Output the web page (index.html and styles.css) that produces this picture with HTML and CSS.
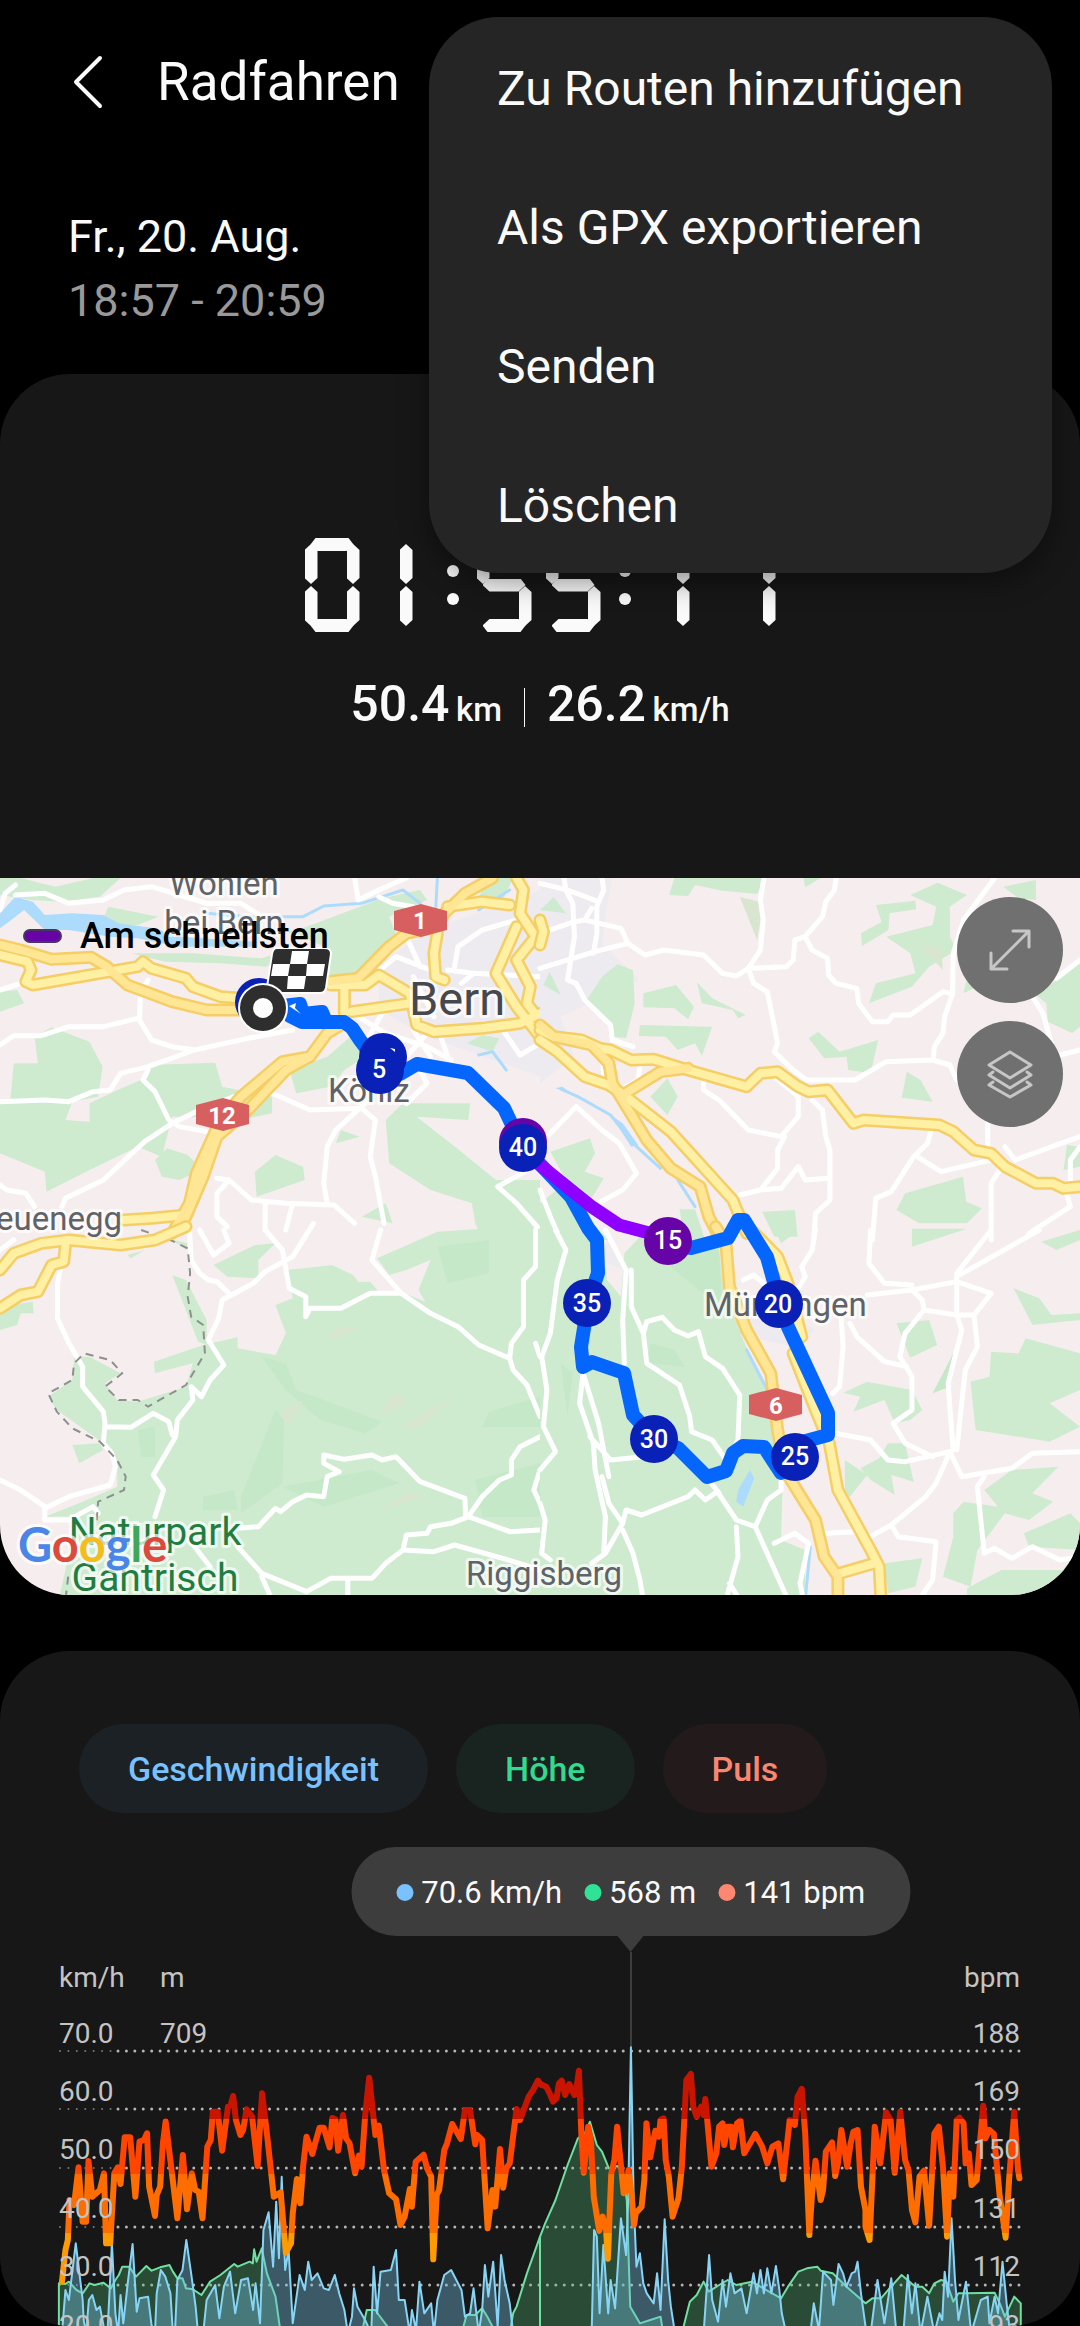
FILE: index.html
```html
<!DOCTYPE html>
<html lang="de">
<head>
    <meta charset="UTF-8">
    <meta name="viewport" content="width=device-width, initial-scale=1.0">
    <title>Radfahren</title>
    <link rel="stylesheet" href="styles.css">
</head>
<body>
    <header class="app-bar">
        <button class="back-button" type="button" aria-label="Zurück">
            <svg width="30" height="54" viewBox="0 0 30 54"><path d="M27 3 3 27l24 24"/></svg>
        </button>
        <h1>Radfahren</h1>
    </header>

    <nav class="menu" aria-label="Weitere Optionen">
        <button type="button">Zu Routen hinzufügen</button>
        <button type="button">Als GPX exportieren</button>
        <button type="button">Senden</button>
        <button type="button">Löschen</button>
    </nav>

    <div class="workout-date">
        <div>Fr., 20. Aug.</div>
        <div class="workout-time">18:57 - 20:59</div>
    </div>

    <main>
        <section class="card">
            <div class="summary">
                <div class="timer" role="img" aria-label="01:55:11">
                    <div class="hours">
                        <span class="digit"><i class="seg top"></i><i class="seg up left"></i><i class="seg up right"></i><i class="seg down left"></i><i class="seg down right"></i><i class="seg bottom"></i></span>
                        <span class="digit one"><i class="seg up right"></i><i class="seg down right"></i></span>
                    </div>
                    <span class="colon"><i></i><i></i></span>
                    <div class="minutes">
                        <span class="digit"><i class="seg top"></i><i class="seg up left"></i><i class="seg middle"></i><i class="seg down right"></i><i class="seg bottom"></i></span>
                        <span class="digit"><i class="seg top"></i><i class="seg up left"></i><i class="seg middle"></i><i class="seg down right"></i><i class="seg bottom"></i></span>
                    </div>
                    <span class="colon"><i></i><i></i></span>
                    <div class="seconds">
                        <span class="digit one"><i class="seg up right"></i><i class="seg down right"></i></span>
                        <span class="digit one"><i class="seg up right"></i><i class="seg down right"></i></span>
                    </div>
                </div>
                <div class="totals">
                    <div>50.4 <small>km</small></div>
                    <div class="divider"></div>
                    <div>26.2 <small>km/h</small></div>
                </div>
            </div>

            <div class="map">
                <svg class="map-canvas" viewBox="0 0 1080 717" role="img" aria-label="Karte der Route">
                    <defs>
                        <g id="roads-nw">
                            <path d="M0 255L80 275 90 300 75 335 95 345 400 290 415 275 440 295 540 325 560 350 640 380 700 385"/>
                            <path d="M960 345L1060 345 1100 315 1190 370 1210 465 1260 485 1400 475 1510 460 1568 430M1000 350V430M1020 425L1190 400"/>
                            <path d="M1270 190L1260 250 1265 320 1290 330M1300 110L1400 95 1480 105M1500 170L1440 310 1500 410 1568 500"/>
                            <path d="M1500 24L1520 60 1510 130 1555 200 1500 270 1540 350 1530 400 1568 450M360 1050L440 1045 540 1035"/>
                        </g>
                        <g id="motorways-nw">
                            <path d="M0 225L60 240 150 268 265 262 310 290 370 345 500 395 600 420 700 420"/>
                            <path d="M950 335L1040 325 1130 230 1180 190 1270 170 1290 130 1350 70 1430 24"/>
                            <path d="M990 465L950 490 900 560 820 575 700 680 640 750 570 910 550 1000 500 1090"/>
                            <path d="M900 560L830 600 720 720 630 800 590 920 540 1040"/>
                        </g>
                        <g id="roads-ne">
                            <path d="M0 480L40 500 120 510 175 535 205 540 265 570 330 568 430 600 600 650 640 610 690 605 750 650 780 665 835 660 910 760 940 750 1160 765 1200 785 1260 840 1310 850 1350 890 1440 940 1490 940 1520 955 1568 950"/>
                            <path d="M0 510L50 545 130 620 200 645 250 680 380 785 560 990 600 1090"/>
                            <path d="M0 150L10 185 0 225"/>
                        </g>
                        <g id="motorways-ne">
                            <path d="M0 465L40 500 150 525 200 580 210 640 310 810 380 895 465 950 490 1040 515 1090M240 675L350 605 430 595"/>
                        </g>
                        <g id="roads-sw">
                            <path d="M190 45L185 95 150 105 110 185 60 195 0 235"/>
                            <path d="M0 120L40 70 120 40 200 30 350 45 450 30 540 -10"/>
                        </g>
                        <g id="roads-se">
                            <path d="M605 -10L690 80 720 160 760 320M735 370L800 540 840 640 865 780 960 960 985 1010 990 1110M870 1030L970 1000"/>
                        </g>
                        <g id="motorways-se">
                            <path d="M510 -10L540 40 550 170 600 300 670 430 690 600 710 720 800 870 825 980 865 1040V1110"/>
                        </g>
                    </defs>

                    <rect class="ground" width="1080" height="717"/>

                    <!-- north west -->
                    <g transform="translate(0 -8) scale(.34439 .33333)">
                        <path class="town" d="M1100 280L1250 180 1568 60V620L1240 500 1100 420z"/>
                        <path class="wood" d="M0 24H60L160 50 270 24H350L290 80 180 95 90 90 0 75zM290 165L315 110 460 140 400 165zM840 190L1110 85 1220 60 1240 90 1130 140 1160 220 1060 300 960 330 950 235 830 175zM380 250L560 250 760 265 830 240 960 230 770 290 640 280 480 275zM0 365L50 360 70 400 0 425zM1390 80L1420 24H1490L1460 90z"/>
                        <path class="wood" d="M40 580H110L100 500 150 472 260 515 298 590 285 680 210 695 190 750 260 755V700L330 665 420 625 430 585 625 578 645 650 790 680V730L720 745 500 740 470 860 400 830 260 900 135 965 130 905 0 850V700L30 690zM450 870L485 835 545 855 590 900 520 930 470 920zM740 905L800 855 880 890 885 930 745 980zM975 820L990 780 1045 800z"/>
                        <path class="wood" d="M1120 750L1170 700H1365L1360 750 1210 740 1345 850 1440 930H1568V1110H1400L1380 1060 1370 1000 1250 960 1130 880zM1050 1040L1120 1000 1140 1060zM860 670L840 600 950 560 1040 480 1060 560 1000 600 960 650zM1355 520L1400 495 1450 505 1430 545z"/>
                        <path class="water" d="M0 130L45 80 95 95 130 135 210 130 300 135 345 160 450 175 520 200 740 215 740 230 520 230 400 205 320 200 200 180 130 180 70 120 20 160 0 175z"/>
                        <path class="stream" d="M600 130L720 140 880 140 940 108 1050 100 1170 60 1220 100M1270 24L1265 120M1390 120L1480 60M1390 555L1430 545 1470 600"/>
                        <path class="street" d="M0 120L15 70 45 45M45 75L130 70 200 100 300 90 360 60 440 50 520 75 600 100 700 100 760 140M0 360L60 340M0 525L40 497 120 497 200 470 300 470 400 445M430 330L408 370 405 450 440 510 500 530 565 540 720 505 850 480M565 540L430 590 350 610 320 660 270 665 200 695 130 690 0 695M430 600L415 630 450 665 490 750 520 770 600 785M180 1010L190 985 300 930 420 815 500 760 590 715 680 680M0 945L20 960 75 970 100 1010"/>
                        <path class="street" d="M630 925L665 930 730 990 830 1000 970 1005 1030 1060M665 930L630 970V1040L660 1070M770 1080V1000M850 1000L830 1080M1060 700L975 780 950 830 940 940 950 1000M790 670L900 720 1050 715 1090 750 1075 860 1090 920 1115 1060M1568 880L1445 950 1500 1000 1568 1080M1180 700L1240 640 1220 600M1030 24L1040 90 1100 60 1180 24M1100 80L1140 100 1200 110"/>
                        <path class="street" d="M1040 440L1120 490 1240 530 1310 570M1130 240L1240 130M1080 320L1150 260 1250 300M1320 290L1330 230 1400 180 1500 150M1200 320L1260 440M1110 430L1060 520M1180 560L1240 490M1200 480L1250 560M1340 340L1375 310 1300 300M1375 310L1568 320M1460 480L1510 555 1568 520M1280 500L1300 560M1180 200L1220 290"/>
                        <use href="#roads-nw" class="casing"/><use href="#motorways-nw" class="casing"/>
                        <use href="#roads-nw" class="road"/><use href="#motorways-nw" class="motorway"/>
                    </g>

                    <!-- north east -->
                    <g transform="translate(540 -8) scale(.34439 .33333)">
                        <path class="town" d="M0 24H210L190 140 180 220 290 330 60 440 100 560 0 640z"/>
                        <path class="wood" d="M390 24H655L630 72 530 62 450 45 430 78 375 75zM0 120L40 80 75 130zM135 390L180 320 225 283 270 300 275 400 250 505 215 500 205 460 160 430zM10 345L28 305 60 375zM300 370L395 345 447 410 430 448 390 415 300 412zM455 335L500 385 598 435 575 445 560 420 470 400zM290 465L500 470 470 558 450 520 400 540 365 500 287 498zM765 24H815L770 52z"/>
                        <path class="wood" d="M975 105L1090 92 1092 118 1015 130 1012 180 935 228 932 190 992 155zM1075 75L1155 38 1240 75 1190 110V200L1210 240 1130 290 1080 350 955 400 975 340 1090 310 1075 250 1005 200 1140 165 1150 110zM1345 50L1440 30V90L1390 85zM1440 375L1568 280V470L1545 490 1475 455 1470 400zM780 505L808 485 870 545 982 510 960 610 895 600 890 560 825 565zM1065 605L1105 630 1140 695 1050 683zM1240 320L1290 340 1230 370z"/>
                        <path class="wood" d="M320 680L370 625 400 680 370 735zM30 845L145 805 160 850 130 905 185 925 150 985 120 990 80 940zM1060 970L1228 920 1238 995 1283 1015 1240 1060 1100 1060 1035 1020zM645 1025L740 1020 748 1100H680zM1530 825L1568 830V890L1520 900zM0 1000L60 950 130 1040 200 1110H0zM405 1018H450L480 1110H420z"/>
                        <path class="meadow" d="M1100 225L1165 225 1170 300zM580 80L630 210 650 100z"/>
                        <path class="water" d="M45 655L65 650 90 670zM205 735L240 760 285 825 265 830z"/>
                        <path class="stream" d="M60 657L110 680 205 735 270 820 350 895M400 930L450 1010"/>
                        <path class="street" d="M0 40L80 60 170 95M70 24L75 60 95 100 100 200 80 330 105 340 130 390 205 465 210 510 270 530M180 24L185 60 165 110V190L155 250M0 190L100 155 130 150 235 175 255 220 160 245 0 295M130 150L150 115M255 220L305 255 360 240 475 255 530 310 570 318 605 295 640 240 648 150 640 90 650 24M605 295L715 290 735 270 740 210 770 200 820 140 830 95 855 60 860 24"/>
                        <path class="street" d="M770 200L790 240 835 265 838 315 860 340 920 355 925 400 965 455 1010 455 1025 435 1075 435 1170 365 1195 370M605 295L620 340 660 365 690 520 680 545 735 600 775 630 915 630 1005 575 1140 570 1190 585 1210 630M1320 24L1230 150 1200 250 1198 370 1175 440 1170 490 1145 530 1142 570M1500 325L1568 270M1430 380L1460 430 1485 520M1510 555L1568 540M1300 750V830M1380 870L1568 800M1350 830L1380 870"/>
                        <path class="street" d="M475 635V660L520 690 605 780 700 800 750 740V680L680 620M790 690L820 720 830 800 842 840V990L800 1030 795 1110M580 975L640 960 690 895V840L710 800M640 960L700 955 750 890 770 930 835 925M1135 785L1125 820 1085 860 1020 965 975 985 965 1110M1095 860L1165 905 1330 865M1335 900L1310 940V1110M1530 975L1540 1010 1420 1090M1568 830L1540 870V950M20 800L105 710 180 780 230 820 280 910 240 960 150 1010M0 960L30 1040 60 1110M290 590L285 630 250 650M180 560L185 610"/>
                        <use href="#roads-ne" class="casing"/><use href="#motorways-ne" class="casing"/>
                        <use href="#roads-ne" class="road"/><use href="#motorways-ne" class="motorway"/>
                    </g>

                    <!-- south west -->
                    <g transform="translate(0 352) scale(.34439 .33333)">
                        <path class="wood" d="M800 225L850 205 835 120 965 105 1025 135 1040 155 1075 155 1100 185 1165 185 1235 215 1215 180 1250 90 1180 120 1130 135 1095 85 1270 5 1400 -4H1568V1110H170L190 1020 215 860H130L240 815 340 770V690L300 640 165 540 140 500 210 450 215 380H260L350 430 305 460 340 510 400 515 540 470 560 400 450 430 447 395 590 345 690 322V355L800 375 830 310z"/>
                        <path class="wood" d="M500 135L540 150 600 270V345L575 335zM620 105L740 45 800 40 750 90V145L660 140zM0 230L95 215 98 250 60 250 50 285 0 300zM210 645L290 640 300 660 230 700zM370 75L420 60 380 85zM500 30L545 40 540 60z"/>
                        <path class="thicket" d="M700 800L800 540 825 560 820 760 700 850zM760 380L830 400 860 480 1110 575 1060 610 930 570 830 480zM1270 50L1420 30V130L1300 160zM1420 545L1568 500V590L1400 590zM590 800L680 780 690 840 590 840zM820 770L1080 720 1160 760 940 830zM1380 750L1568 700V860L1400 860zM400 600L450 590V680L410 680z"/>
                        <path class="meadow" d="M810 550L880 510 840 590zM1100 560L1130 500 1160 490 1180 520zM1160 590L1320 500 1220 590zM950 335L980 290 1040 295zM1110 840L1190 785 1230 800z"/>
                        <path class="street" d="M175 120L167 160V265L200 340 240 410V470L300 545 305 580 300 640 325 670 335 710 320 765 200 800 130 835V870H200L270 830 285 850M0 750L60 780 130 830M305 590L380 592 445 550 490 575 500 615M450 860L475 780 445 735 510 620 515 570 560 510 555 470 585 500 610 450 650 405 605 330 635 265 645 210 735 160 770 125 850 80 910 -20M665 190L630 155 605 150 580 130 555 90 550 0M580 0L620 75 665 40 650 0M0 60L40 30"/>
                        <path class="street" d="M770 0L820 60 840 175 888 200V260L900 235 990 235 1075 190 1165 190 1250 250 1330 290 1390 345 1480 385 1490 420 1530 465 1568 560M1165 190L1080 90 1105 0M1480 385L1485 340 1520 290V150L1555 110V0M1568 620L1510 650 1485 690V735L1450 750 1400 800 1360 860 1310 880 1250 890 1240 910 1180 915 1170 960 1120 1000 1080 1045H960L890 1085 760 1030 690 950"/>
                        <path class="street" d="M690 895L750 890 800 835 815 845 850 815 890 795 940 800 950 740 985 725 940 700V675L1000 688 1080 675 1110 690 1150 680 1220 755 1350 805 1352 860M1360 860L1480 905 1568 900M1170 960L1260 965 1320 945 1460 985 1568 1020M1010 1045V1110M760 1040L790 1110M550 930L610 1010M1568 380L1555 340M1568 720L1550 780 1568 820"/>
                        <path class="border" d="M410 0L495 30 545 55 552 130 545 200 555 260 590 285 595 370 540 465 430 530 400 510 345 510 305 470 355 430 320 390 245 370 215 400 210 450 140 490 165 545 210 595 290 635 340 690 365 740 360 780 285 815 280 880M198 1040L190 1110"/>
                        <use href="#roads-sw" class="casing"/><use href="#roads-sw" class="road"/>
                    </g>

                    <!-- south east -->
                    <g transform="translate(540 352) scale(.34439 .33333)">
                        <path class="wood" d="M0 -4L180 30 195 150 235 200 245 70 290 20 520 50 530 160 590 330 660 480 690 600 705 740 700 930 770 960V1110H0zM680 -4L745 5 700 40zM1080 -4H1240L1080 50zM1455 35L1568 0V30L1500 60zM1375 175L1450 205 1485 255 1568 250V270L1430 285zM1035 280L1130 270 1153 345 1075 383zM1310 365L1390 370 1410 325 1568 370V480L1480 520 1568 590 1480 635 1265 600 1250 455 1305 440z"/>
                        <path class="wood" d="M880 488L950 455 1080 480 1110 540 1075 570 1030 580 1000 510 910 545 930 500zM885 690L950 735 900 800 885 790zM930 715L985 685 1010 640 1060 640 1085 755 1020 735 1030 795 960 750zM1200 850L1230 815 1330 830 1290 780 1370 720 1505 710 1430 790 1490 815 1420 870 1350 850 1270 960 1250 1070 1170 1040 1200 920zM1405 910L1540 850 1568 880V960L1420 950zM1000 1000L1110 985 1090 1070 1010 1090zM1240 1075L1340 1020H1568V1110H1240z"/>
                        <path class="thicket" d="M1200 370L1140 490 1190 470zM310 400L320 340 390 360 420 410zM450 60L520 60 530 240 380 110zM60 400L95 430 80 560z"/>
                        <path class="town" d="M600 270L700 240 800 300 740 350 640 330zM185 40L215 40 245 120 195 100z"/>
                        <path class="water" d="M610 720L622 745 590 830 570 815 575 780z"/>
                        <path class="stream" d="M785 950L770 1110M600 360L660 480"/>
                        <path class="street" d="M45 0L75 60 50 150 30 310 5 380 20 480 10 590 45 665 0 720M0 820L15 870 5 970 30 990M190 0L250 120 240 270 245 400M265 120V230L300 310 310 400 405 465 435 560 440 605 500 630 540 690M300 310L310 275 355 262 390 300 430 318 460 305 480 380 530 415 580 495 575 630 560 660M125 430L115 520 155 640 160 720 190 860 185 970M125 430L170 580 200 740M145 620L205 690 300 680M180 740L200 820 240 880 190 970 150 1000"/>
                        <path class="street" d="M240 880L250 840 295 855 430 800 450 780 480 810 515 785 570 870 625 890 660 810 700 780V740M490 750L520 790M240 900L270 970 290 1050 300 1110M570 890L575 980 545 1090M625 890L720 1110M550 1060L580 1110M680 940L740 910 780 940 755 1060 765 1110M800 0L790 60 760 110 770 140 750 175M960 0L955 100 1000 160 1080 165M950 195L1080 180 1210 155V130L1310 0M1210 140L1450 0M590 150L620 135 650 160"/>
                        <path class="street" d="M1080 180L1110 210 1115 240 1060 310 1045 380 1080 440V540L1025 580 1060 640 1140 680M1115 240L1210 255 1260 255 1310 190 1210 155V255L1225 300 1185 460 1195 600 1200 660M1260 255L1270 350 1235 420 1210 660M900 280L920 320 1000 395 1065 410M875 270L880 350 870 470 850 490M860 610L960 630 1010 690 1060 695 1190 665 1225 740 1370 715 1430 670 1568 665M1190 665L1150 760 1120 800 1020 885 950 925M1020 885L1040 920 1150 935 1140 1050 1100 1110M1290 740L1270 770 1290 970 1320 955 1370 985 1430 950 1510 990 1568 980M830 910L920 905"/>
                        <use href="#roads-se" class="casing"/><use href="#motorways-se" class="casing"/>
                        <use href="#roads-se" class="road"/><use href="#motorways-se" class="motorway"/>
                    </g>

                    <g class="shield">
                        <path d="M394 33l27-7 26 7v19l-26 7-27-7z"/><text x="420" y="51">1</text>
                        <path d="M196 227l27-7 26 7v19l-26 7-27-7z"/><text x="222" y="246">12</text>
                        <path d="M749 517l27-7 26 7v19l-26 7-27-7z"/><text x="776" y="536">6</text>
                    </g>

                    <g class="place">
                        <text x="224" y="17" text-anchor="middle">Wohlen</text>
                        <text x="224" y="56" text-anchor="middle">bei Bern</text>
                        <text x="409" y="137" class="city">Bern</text>
                        <text x="328" y="224">Köniz</text>
                        <text x="122" y="352" text-anchor="end">Neuenegg</text>
                        <text x="704" y="438">Münsingen</text>
                        <text x="466" y="707">Riggisberg</text>
                        <text x="155" y="667" text-anchor="middle" class="park">Naturpark</text>
                        <text x="155" y="713" text-anchor="middle" class="park">Gantrisch</text>
                    </g>

                    <path class="route" d="M265 130L300 126 303 136 322 134 326 144M290 138L302 144H344L352 150 360 162 372 178 400 196 417 186 468 195 504 230 513 249 523 268 571 319 588 350 597 362 598 395 588 425 581 469 583 489 592 484 624 495 633 537 655 561 678 570 707 599 726 593 733 575 743 568 764 569 781 595 795 579 802 564 828 557V535L788 449 774 404 767 379 744 342H738L728 360 691 370 668 363"/>
                    <path class="route fastest" d="M523 270L540 287 592 329 619 347 668 360"/>

                    <g class="km-marker">
                        <circle cx="259" cy="124" r="24"/>
                        <circle cx="383" cy="179" r="24"/><circle cx="380" cy="192" r="24"/><text x="379" y="200">5</text>
                        <circle cx="523" cy="264" r="24" class="fast"/><circle cx="523" cy="270" r="24"/><text x="523" y="278">40</text>
                        <circle cx="668" cy="363" r="24" class="fast"/><text x="668" y="371">15</text>
                        <circle cx="587" cy="425" r="24"/><text x="587" y="434">35</text>
                        <circle cx="779" cy="426" r="24"/><text x="778" y="435">20</text>
                        <circle cx="654" cy="561" r="24"/><text x="654" y="570">30</text>
                        <circle cx="795" cy="579" r="24"/><text x="795" y="587">25</text>
                        <path class="arrow" d="M390 170l5 1v3zM289 128l7-3-1 5 6 6z"/>
                    </g>

                    <g class="flag">
                        <path class="flag-body" d="M277 70h48q6 0 6 6l-5 34q-1 5-6 5h-48q-6 0-5-6l5-33q1-6 5-6z"/>
                        <path class="check" d="M292 73h17l-2 13h-17zM273 86h17l-2 12h-17zM307 86h18l-2 12h-17zM288 98h18l-2 13h-17z"/>
                        <circle class="flag-body" cx="263" cy="130" r="24"/>
                        <circle class="check" cx="263" cy="130" r="10"/>
                    </g>

                    <text class="google" x="18" y="684"><tspan class="g-blue">G</tspan><tspan class="g-red">o</tspan><tspan class="g-yellow">o</tspan><tspan class="g-blue">g</tspan><tspan class="g-green">l</tspan><tspan class="g-red">e</tspan></text>
                </svg>

                <div class="map-legend"><span class="swatch"></span>Am schnellsten</div>

                <div class="map-controls">
                    <button type="button" aria-label="Karte vergrößern">
                        <svg width="44" height="44" viewBox="0 0 44 44"><path d="M3 41 41 3M25 3h16v16M3 25v16h16"/></svg>
                    </button>
                    <button type="button" aria-label="Kartenebenen">
                        <svg width="48" height="50" viewBox="0 0 48 50"><path d="M24 3 45 16 24 29 3 16zM7 23l-4 3 21 13 21-13-4-3M7 33l-4 3 21 12 21-12-4-3"/></svg>
                    </button>
                </div>
            </div>
        </section>

        <section class="card chart-card">
            <div class="chips">
                <button class="chip speed" type="button">Geschwindigkeit</button>
                <button class="chip altitude" type="button">Höhe</button>
                <button class="chip pulse" type="button">Puls</button>
            </div>

            <div class="tooltip-row">
                <div class="tooltip">
                    <span class="speed">70.6 km/h</span>
                    <span class="altitude">568 m</span>
                    <span class="pulse">141 bpm</span>
                </div>
            </div>

            <svg class="chart" viewBox="0 -8 1080 374" role="img" aria-label="Geschwindigkeit, Höhe und Puls">
                <defs>
                    <!-- heart rate zones -->
                    <linearGradient id="zones" gradientUnits="userSpaceOnUse" x1="0" y1="0" x2="0" y2="1000">
                        <stop offset=".476" stop-color="#c91500"/>
                        <stop offset=".476" stop-color="#ff4500"/>
                        <stop offset=".642" stop-color="#ff4500"/>
                        <stop offset=".642" stop-color="#ff6d00"/>
                        <stop offset=".819" stop-color="#ff6d00"/>
                        <stop offset=".819" stop-color="#ff9a00"/>
                    </linearGradient>
                </defs>

                <path class="grid" d="M118 91H1021M118 149H1021M118 208H1021M118 267H1021M118 325H1021"/>
                <path class="grid faint" d="M60 91H118M60 149H118M60 208H118M60 267H118M60 325H118"/>
                <path class="cursor" d="M631 -8V92"/>

                <g transform="scale(.34439 .33333)">
                    <path class="area-altitude" d="M171 1120V970L190 972 200 965 222 990 240 1000 260 970 275 975 300 968 322 985 335 960 345 945 355 920 375 920 395 950 425 918 440 932 465 922 492 915 502 935 515 955 530 955 540 985 560 988 585 1005 610 965 640 945 680 912 690 920 725 905 734 910 738 868 745 905 760 865 775 940 800 1010 815 1120M1050 1120L1065 1050 1090 1050 1100 1065 1140 1120M1340 1120L1355 1065 1380 1065 1400 1045 1415 1070 1440 1120M1480 1120L1490 1060 1500 1040 1530 940 1568 830V1120"/>
                    <path class="area-speed" d="M180 1120L190 990 200 1020 220 850 240 1020 243 1080 250 1120 258 1020 268 1005 280 1050 290 1040 305 1120 312 1120 325 850 335 1060 343 1120 350 1005 358 1090 372 960 385 852 397 1055 405 1015 430 1010 440 1095 450 1120 455 1000 467 930 480 950 495 1000 502 1120 508 1120 515 960 530 930 541 840 555 940 568 1040 575 1120 590 1120 600 1020 625 975 637 1075 650 980 668 935 683 1060 700 960 720 955 735 1050 742 970 755 1090 765 810 780 757 793 920 802 725 810 895 818 650 828 930 838 870 850 1090 870 945 885 990 895 905 905 960 922 940 940 985 955 990 972 945 985 1000 1000 1050 1010 1120 1022 1070 1028 985 1038 1040 1060 1080 1078 1120 1085 920 1095 1060 1105 935 1135 930 1150 870 1158 1020 1175 1020 1190 1120 1196 1050 1208 1110 1218 965 1232 1060 1252 1030 1260 1120 1270 1020 1290 945 1310 930 1340 990 1350 1070 1365 1060 1375 985 1390 1120 1400 1050 1408 915 1418 1010 1432 905 1445 1100 1455 885 1465 960 1480 1030 1490 1120"/>
                </g>
                <g transform="translate(540 0) scale(.34439 .33333)">
                    <path class="area-altitude" d="M0 1120V830L15 790 45 720 80 615 110 535 130 520 145 485 165 555 180 575 200 625 225 618 240 640 252 720 262 1040 290 1090 320 1080 350 1070 358 1120M412 1120L435 1025 455 1005 475 965 490 995 520 975 545 960 570 975 615 965 640 980 700 1015 720 980 750 935 775 925 805 920 815 932 850 940 890 980 945 1030 965 1015 990 1015 1015 985 1050 945 1090 980 1110 980 1130 1000 1145 970 1165 960 1180 965 1200 1025 1215 1000 1240 1000 1320 998 1335 1030 1350 1070 1377 1010 1396 1030V1120"/>
                    <path class="area-speed" d="M150 1120L157 810 165 830 173 1060 184 855 198 1060 205 960 218 1045 235 775 250 885 256 720 264 262 272 720 280 920 290 880 300 970 310 1000 330 1030 340 940 350 1050 362 778 372 960 380 1040 392 1120M475 1120L491 885 500 1020 517 1085 530 960 540 1040 553 940 565 1000 585 985 600 1060 620 940 630 1000 640 930 650 1000 660 925 672 1000 685 918 695 990 702 1060 715 1120M785 1120L795 1030 810 1110 822 935 845 960 852 1035 867 912 880 940 890 980 905 940 915 935 922 905 932 1000 948 1120M960 1120L980 960 1000 1090 1020 955 1035 1120M1055 1120L1068 945 1080 1060 1090 970 1105 1120 1125 1010 1145 1120 1160 1060 1168 1080 1175 935 1185 1010 1195 775 1205 960 1215 1080 1237 965 1252 1120 1280 1020 1300 1010 1305 1090 1320 1010 1330 1060 1343 905 1355 1030 1365 1120"/>
                </g>
                <g transform="scale(.34439 .33333)">
                    <path class="line-pulse" d="M180 965L190 870 197 840 202 720 215 735 228 622 240 785 250 785 257 603 268 710 290 690 302 640 308 850 320 850 332 640 342 622 350 672 362 532 378 532 393 710 405 545 418 540 427 520 433 680 450 768 455 705 465 680 473 550 481 484 497 620 515 775 531 585 543 748 557 640 567 690 577 695 588 775 602 560 612 540 618 455 632 455 645 572 662 440 670 435 677 408 685 480 698 525 706 510 716 448 732 470 748 618 761 400 775 520 795 710 815 697 830 878 845 850 850 760 862 657 872 730 880 620 890 530 907 582 915 550 928 503 940 503 957 562 965 474 974 478 982 572 996 465 1005 535 1015 550 1031 640 1042 587 1050 620 1060 470 1072 353 1090 525 1100 497 1115 630 1130 700 1150 718 1163 795 1175 770 1190 687 1196 740 1207 605 1230 584 1240 625 1252 650 1258 898 1268 705 1275 690 1290 570 1298 550 1313 492 1338 537 1350 450 1365 450 1380 553 1385 525 1400 540 1416 805 1430 690 1438 740 1452 567 1461 683 1470 625 1480 610 1500 447 1510 480 1535 410 1548 390 1562 362 1572 375"/>
                </g>
                <g transform="translate(540 0) scale(.34439 .33333)">
                    <path class="line-pulse" d="M-4 370L18 380 28 400 38 425 48 415 55 370 63 362 73 405 85 372 100 405 106 385 113 332 120 520 127 638 140 500 148 545 156 710 172 812 182 770 192 810 197 896 207 640 216 600 224 500 243 700 250 690 257 630 266 705 273 795 278 760 295 740 303 660 309 490 320 592 335 512 345 530 350 480 359 475 365 600 374 650 385 770 402 715 412 620 425 360 438 342 445 440 455 470 468 440 475 465 480 417 498 620 512 580 520 500 530 490 535 555 545 500 555 500 560 562 572 490 582 482 593 580 610 550 625 522 645 560 660 610 675 560 692 550 706 658 725 480 740 495 748 410 760 387 770 520 782 825 790 700 800 602 815 720 822 690 830 575 848 547 857 648 865 610 875 510 892 620 902 550 910 515 922 510 932 680 945 750 945 800 957 840 972 500 988 610 1005 457 1018 480 1030 638 1046 455 1060 600 1070 630 1080 750 1090 787 1102 650 1115 632 1130 797 1145 520 1158 500 1170 620 1182 830 1190 640 1200 710 1210 480 1218 473 1230 490 1236 610 1245 580 1253 675 1268 660 1287 437 1293 535 1305 510 1318 522 1335 710 1352 833 1362 660 1377 455 1388 630 1392 655"/>
                </g>

                <g class="axis">
                    <text x="59" y="27">km/h</text><text x="160" y="27">m</text><text x="1020" y="27" class="end">bpm</text>
                    <text x="59" y="83">70.0</text><text x="160" y="83">709</text><text x="1020" y="83" class="end">188</text>
                    <text x="59" y="141">60.0</text><text x="1020" y="141" class="end">169</text>
                    <text x="59" y="199">50.0</text><text x="1020" y="199" class="end">150</text>
                    <text x="59" y="258">40.0</text><text x="1020" y="258" class="end">131</text>
                    <text x="59" y="316">30.0</text><text x="1020" y="316" class="end">112</text>
                    <text x="59" y="375">20.0</text><text x="1020" y="375" class="end">93</text>
                </g>
            </svg>
        </section>
    </main>
</body>
</html>
```
FILE: styles.css
```css
body {
    position: relative;
    margin: 0;
    background-color: #000;
    color: #fafafa;
    font-family: Roboto, sans-serif;
}

button {
    border: none;
    padding: 0;
    background: none;
    color: inherit;
    font-family: inherit;
    cursor: pointer;
}

svg {
    display: block;
}

/* Header */
.app-bar {
    display: flex;
    align-items: center;
    gap: 54px;
    height: 164px;
    padding-left: 73px;
}
.app-bar h1 {
    margin: 0;
    font-size: 53px;
    font-weight: 400;
}
.back-button path {
    fill: none;
    stroke: #fafafa;
    stroke-width: 4;
    stroke-linecap: round;
    stroke-linejoin: round;
}

.workout-date {
    padding: 41px 68px;
    font-size: 45px;
    line-height: 64px;
}
.workout-time {
    color: #999;
}

/* Options menu */
.menu {
    position: absolute;
    top: 17px;
    right: 28px;
    z-index: 2;
    display: flex;
    flex-direction: column;
    width: 623px;
    border-radius: 70px;
    background-color: #252525;
    box-shadow: 0 8px 30px rgba(0, 0, 0, 0.45);
}
.menu button {
    height: 139px;
    padding: 4px 68px 0;
    font-size: 48px;
    text-align: left;
}

.card {
    overflow: hidden;
    border-radius: 70px;
    background-color: #171717;
}

/* Duration and totals */
.summary {
    display: flex;
    flex-direction: column;
    align-items: center;
    gap: 40px;
    padding: 164px 0 136px;
}
.timer,
.timer div {
    display: flex;
}
.timer .hours {
    gap: 40px;
}
.timer .minutes {
    gap: 14px;
}
.timer .seconds {
    gap: 73px;
    padding-left: 28px;
}
.digit {
    display: grid;
    width: 55px;
    height: 94px;
}
.digit.one {
    width: 13px;
}
.seg {
    grid-area: 1 / 1;
    background-color: #fafafa;
}
.seg.top,
.seg.middle,
.seg.bottom {
    justify-self: center;
    width: 43px;
    height: 13px;
    clip-path: polygon(5px 0, 38px 0, 100% 50%, 36px 100%, 7px 100%, 0 50%);
}
.seg.middle {
    align-self: center;
}
.seg.bottom {
    align-self: end;
    clip-path: polygon(7px 0, 36px 0, 100% 50%, 38px 100%, 5px 100%, 0 50%);
}
.seg.up,
.seg.down {
    width: 13px;
    height: 40px;
    margin: 6px 0;
    clip-path: polygon(50% 0, 100% 6px, 100% 34px, 50% 100%, 0 34px, 0 6px);
}
.seg.down {
    align-self: end;
}
.seg.right {
    justify-self: end;
}
.colon {
    display: flex;
    flex-direction: column;
    gap: 16px;
    margin: 27px 18px 0;
}
.hours + .colon {
    margin-left: 34px;
}
.colon i {
    width: 12px;
    height: 12px;
    border-radius: 50%;
    background-color: #fafafa;
}

.totals {
    display: flex;
    align-items: center;
    gap: 22px;
    font-size: 50px;
    font-weight: 500;
    line-height: 64px;
}
.totals small {
    margin-left: -6px;
    font-size: 33px;
}
.divider {
    width: 1px;
    height: 39px;
    background-color: #fafafa;
}

/* Map */
.map {
    position: relative;
}
.map-canvas {
    width: 100%;
    height: auto;
}
.map-canvas path {
    vector-effect: non-scaling-stroke;
}
.ground { fill: #f6eeee; }
.wood { fill: #ceebd0; }
.thicket { fill: #c4e8c8; }
.meadow { fill: #d8e6d0; }
.town { fill: #eeebf0; }
.water { fill: #addbfc; }
.stream,
.street,
.border,
.casing,
.road,
.motorway,
.route {
    fill: none;
    stroke-linejoin: round;
    stroke-linecap: round;
}
.stream {
    stroke: #addbfc;
    stroke-width: 3;
}
.street {
    stroke: #fff;
    stroke-width: 5;
}
.border {
    stroke: #8f8f8f;
    stroke-width: 2;
    stroke-linecap: butt;
    stroke-dasharray: 8 6;
}
.casing {
    stroke: #f5ce66;
    stroke-width: 13;
}
.road {
    stroke: #fff0a3;
    stroke-width: 8;
}
.motorway {
    stroke: #ffe695;
    stroke-width: 8;
}
.shield path {
    fill: #d85f5f;
}
.shield text {
    fill: #fff;
    font-size: 24px;
    font-weight: 700;
    text-anchor: middle;
}
.place text {
    fill: #5f6368;
    stroke: rgba(255, 255, 255, 0.7);
    stroke-width: 6px;
    stroke-linejoin: round;
    paint-order: stroke;
    font-size: 33px;
}
.place .city {
    fill: #45484c;
    font-size: 47px;
}
.place .park {
    fill: #1e7e40;
    font-size: 39px;
}
.route {
    stroke: #0566fd;
    stroke-width: 14;
}
.route.fastest {
    stroke: #9000ff;
    stroke-width: 13;
}
.km-marker circle {
    fill: #0a21b8;
}
.km-marker .fast {
    fill: #6604a8;
}
.km-marker text {
    fill: #fff;
    font-size: 25px;
    font-weight: 500;
    text-anchor: middle;
}
.arrow,
.check {
    fill: #fff;
}
.flag-body {
    fill: #2e2e2e;
    stroke: #fff;
    stroke-width: 2;
}
.google {
    stroke: rgba(255, 255, 255, 0.7);
    stroke-width: 6px;
    paint-order: stroke;
    font-family: Lato, sans-serif;
    font-size: 47px;
    font-weight: 700;
}
.g-blue { fill: #4a86e8; }
.g-red { fill: #db4a3c; }
.g-yellow { fill: #f2bd1d; }
.g-green { fill: #3fa75a; }

.map-legend {
    position: absolute;
    top: 38px;
    left: 23px;
    display: flex;
    align-items: center;
    gap: 18px;
    color: #000;
    font-size: 36px;
    font-weight: 500;
    line-height: 40px;
}
.swatch {
    box-sizing: border-box;
    width: 39px;
    height: 14px;
    border: 2px solid #4a3560;
    border-radius: 7px;
    background-color: #6604a8;
}

.map-controls {
    position: absolute;
    top: 19px;
    right: 17px;
    display: flex;
    flex-direction: column;
    gap: 18px;
}
.map-controls button {
    display: flex;
    align-items: center;
    justify-content: center;
    width: 106px;
    height: 106px;
    border-radius: 50%;
    background-color: #707070;
}
.map-controls path {
    fill: none;
    stroke: #c6c6c6;
    stroke-width: 3;
    stroke-linecap: round;
    stroke-linejoin: round;
}

/* Chart */
.chart-card {
    margin-top: 56px;
}
.chips {
    display: flex;
    gap: 28px;
    padding: 73px 79px 34px;
}
.chip {
    height: 89px;
    padding: 0 49px;
    border-radius: 45px;
    font-size: 34px;
    font-weight: 500;
}
.chip.speed {
    background-color: #1c2126;
    color: #7ac1ff;
}
.chip.altitude {
    background-color: #192320;
    color: #33d98f;
}
.chip.pulse {
    background-color: #231b1b;
    color: #f98670;
}

.tooltip-row {
    position: relative;
    height: 105px;
}
.tooltip {
    position: absolute;
    left: 58.4%;
    display: flex;
    align-items: center;
    gap: 22px;
    height: 89px;
    padding: 2px 45px 0;
    box-sizing: border-box;
    border-radius: 45px;
    background-color: #3d3d3d;
    font-size: 31px;
    white-space: nowrap;
    transform: translateX(-50%);
}
.tooltip::after {
    content: "";
    position: absolute;
    top: 100%;
    left: 50%;
    border: 13px solid transparent;
    border-top: 16px solid #3d3d3d;
    border-bottom: none;
    transform: translateX(-50%);
}
.tooltip span {
    display: flex;
    align-items: center;
    gap: 8px;
}
.tooltip span::before {
    content: "";
    width: 17px;
    height: 17px;
    border-radius: 50%;
}
.tooltip .speed::before { background-color: #7ac1ff; }
.tooltip .altitude::before { background-color: #30e295; }
.tooltip .pulse::before { background-color: #ff8670; }

.chart {
    width: 100%;
    height: auto;
}
.chart path {
    vector-effect: non-scaling-stroke;
    stroke-linejoin: round;
}
.grid {
    fill: none;
    stroke: #b4b4b4;
    stroke-width: 3;
    stroke-linecap: round;
    stroke-dasharray: 0 8.42;
}
.grid.faint {
    stroke-width: 2;
    stroke: #777;
}
.cursor {
    stroke: #3d3d3d;
    stroke-width: 2;
}
.area-altitude {
    fill: rgba(83, 190, 125, 0.32);
    stroke: #6fe0a0;
    stroke-width: 2;
}
.area-speed {
    fill: rgba(115, 190, 225, 0.4);
    stroke: #88d4f4;
    stroke-width: 2;
}
.line-pulse {
    fill: none;
    stroke: url(#zones);
    stroke-width: 6;
    stroke-linecap: round;
}
.axis text {
    fill: #c4c4c4;
    font-size: 28px;
}
.axis .end {
    text-anchor: end;
}
```
